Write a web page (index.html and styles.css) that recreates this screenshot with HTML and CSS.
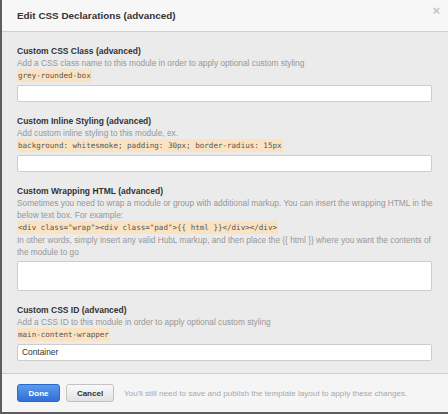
FILE: index.html
```html
<!DOCTYPE html>
<html>
<head>
<meta charset="utf-8">
<link rel="stylesheet" href="styles.css">
</head>
<body>
<div class="modal">
  <div class="header">
    <h1 class="title">Edit CSS Declarations (advanced)</h1>
    <span class="close">×</span>
  </div>
  <div class="content">
    <div class="field">
      <div class="label">Custom CSS Class (advanced)</div>
      <div class="desc">Add a CSS class name to this module in order to apply optional custom styling</div>
      <div class="desc"><code>grey-rounded-box</code></div>
      <div class="input"></div>
    </div>
    <div class="field">
      <div class="label">Custom Inline Styling (advanced)</div>
      <div class="desc">Add custom inline styling to this module, ex.</div>
      <div class="desc"><code>background: whitesmoke; padding: 30px; border-radius: 15px</code></div>
      <div class="input"></div>
    </div>
    <div class="field">
      <div class="label">Custom Wrapping HTML (advanced)</div>
      <div class="desc">Sometimes you need to wrap a module or group with additional markup. You can insert the wrapping HTML in the below text box. For example:</div>
      <div class="desc"><code>&lt;div class="wrap"&gt;&lt;div class="pad"&gt;{{ html }}&lt;/div&gt;&lt;/div&gt;</code></div>
      <div class="desc">In other words, simply insert any valid HubL markup, and then place the {{ html }} where you want the contents of the module to go</div>
      <div class="input tall"></div>
    </div>
    <div class="field">
      <div class="label">Custom CSS ID (advanced)</div>
      <div class="desc">Add a CSS ID to this module in order to apply optional custom styling</div>
      <div class="desc"><code>main-content-wrapper</code></div>
      <div class="input">Container</div>
    </div>
  </div>
  <div class="footer">
    <button class="btn primary">Done</button>
    <button class="btn secondary">Cancel</button>
    <span class="note">You'll still need to save and publish the template layout to apply these changes.</span>
  </div>
</div>
</body>
</html>
```
FILE: styles.css
```css
html, body {
  margin: 0;
  padding: 0;
}
body {
  width: 448px;
  height: 414px;
  background: #5d5d5d;
  font-family: "Liberation Sans", Arial, sans-serif;
  overflow: hidden;
}
.modal {
  margin-left: 2px;
  width: 446px;
  height: 411px;
  background: #ebebeb;
  display: flex;
  flex-direction: column;
}
.header {
  height: 32px;
  background: #f7f7f7;
  border-bottom: 1px solid #cfcfcf;
  display: flex;
  align-items: center;
  padding: 0 8px 0 15px;
  box-sizing: border-box;
  flex: none;
  position: relative;
}
.title {
  margin: 0;
  font-size: 9.9px;
  font-weight: bold;
  color: #333;
}
.close {
  position: absolute;
  right: 8px;
  top: 3px;
  font-size: 13px;
  color: #c4c4c4;
  font-weight: bold;
}
.content {
  flex: 1;
  padding: 12px 16px 0 15px;
}
.field {
  margin-bottom: 12px;
}
.label {
  font-size: 8.5px;
  font-weight: bold;
  color: #333;
  line-height: 11px;
  padding-top: 2px;
}
.desc {
  font-size: 8.3px;
  color: #979797;
  line-height: 12px;
  margin-right: -6px;
}
code {
  font-family: "DejaVu Sans Mono", "Liberation Mono", monospace;
  font-size: 7.55px;
  color: #555;
  background: #fbe3c2;
  padding: 2px 1px;
}
.input {
  margin-top: 3px;
  height: 17px;
  background: #fff;
  border: 1px solid #cdcdcd;
  border-radius: 2px;
  box-sizing: border-box;
  font-size: 8.4px;
  color: #333;
  line-height: 15px;
  padding-left: 4px;
}
.input.tall {
  margin-top: 3px;
  height: 30px;
}
.footer {
  flex: none;
  height: 39px;
  border-top: 1px solid #cfcfcf;
  background: #f5f5f5;
  display: flex;
  align-items: center;
  padding: 0 0 0 15px;
  box-sizing: border-box;
  gap: 6px;
}
.btn {
  height: 18px;
  border-radius: 3px;
  font-family: "Liberation Sans", Arial, sans-serif;
  font-size: 8px;
  font-weight: bold;
  padding: 0;
}
.primary {
  width: 43px;
  color: #fff;
  border: 1px solid #2c68c9;
  background: linear-gradient(#5b9bec, #2f6fd9);
}
.secondary {
  width: 48px;
  color: #333;
  border: 1px solid #c2c2c2;
  background: linear-gradient(#fafafa, #e2e2e2);
}
.note {
  margin-left: 4px;
  font-size: 8.1px;
  color: #a8a8a8;
}
```
